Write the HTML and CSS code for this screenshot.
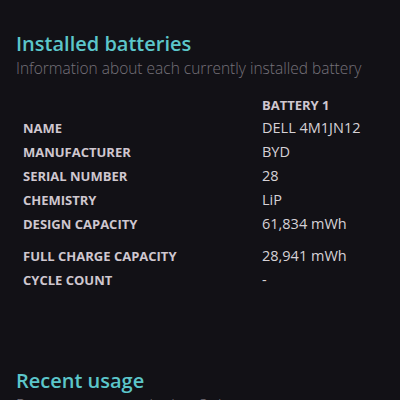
FILE: index.html
```html
<!DOCTYPE html>
<html>
<head>
<meta charset="utf-8">
<link rel="stylesheet" href="styles.css">
</head>
<body>
<div class="page">
  <h1 class="title">Installed batteries</h1>
  <p class="subtitle">Information about each currently installed battery</p>
  <table class="info">
    <tr class="head"><td class="label"></td><td class="col">BATTERY 1</td></tr>
    <tr><td class="label">NAME</td><td class="value">DELL 4M1JN12</td></tr>
    <tr><td class="label">MANUFACTURER</td><td class="value">BYD</td></tr>
    <tr><td class="label">SERIAL NUMBER</td><td class="value">28</td></tr>
    <tr><td class="label">CHEMISTRY</td><td class="value">LiP</td></tr>
    <tr class="spaced"><td class="label">DESIGN CAPACITY</td><td class="value">61,834 mWh</td></tr>
    <tr><td class="label">FULL CHARGE CAPACITY</td><td class="value">28,941 mWh</td></tr>
    <tr><td class="label">CYCLE COUNT</td><td class="value">-</td></tr>
  </table>
  <h1 class="title second">Recent usage</h1>
  <p class="subtitle">Power states over the last 3 days</p>
</div>
</body>
</html>
```
FILE: styles.css
```css
html, body {
  margin: 0;
  padding: 0;
  background: #121116;
  height: 100%;
  overflow: hidden;
}
.page {
  padding: 30px 0 0 16px;
  font-family: "Open Sans", sans-serif;
}
.title {
  margin: 0;
  font-weight: 600;
  font-size: 20px;
  line-height: 28px;
  color: #5cc6ca;
}
.subtitle {
  margin: 0;
  font-weight: 300;
  font-size: 15.5px;
  line-height: 20px;
  color: #76727a;
}
.info {
  border-collapse: collapse;
  margin: 16px 0 0 7px;
}
.info td {
  padding: 0;
  height: 24px;
  line-height: 24px;
  vertical-align: top;
}
.info .head td {
  height: 22px;
  line-height: 22px;
}
.label {
  width: 239px;
  font-weight: 700;
  font-size: 13px;
  color: #cfc7cf;
}
.col {
  font-weight: 700;
  font-size: 13px;
  color: #cfc7cf;
}
.value {
  font-weight: 400;
  font-size: 14.5px;
  color: #d6d2d6;
}
.spaced td {
  padding-bottom: 8px;
}
.second {
  margin-top: 75px;
}
```
